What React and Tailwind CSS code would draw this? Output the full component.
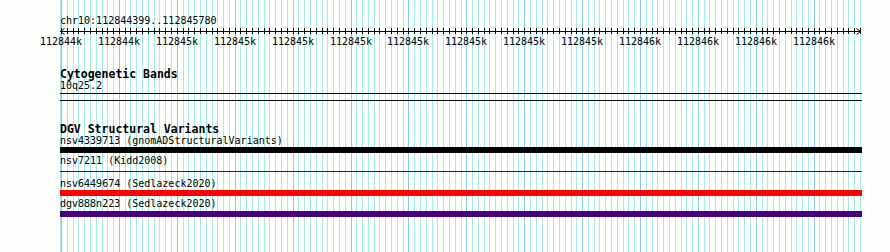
import React from "react";

const X0 = 61;
const MINOR = 5.79;
const MAJOR_LABELS = [
  "112844k", "112844k", "112845k", "112845k", "112845k", "112845k", "112845k",
  "112845k", "112845k", "112845k", "112846k", "112846k", "112846k", "112846k",
];

function Grid() {
  const lines = [];
  lines.push(<rect key="edge" x={60} y={0} width={1} height={252} fill="#a8e9ee" />);
  for (let k = 0; k <= 138; k++) {
    const x = Math.round(X0 + k * MINOR);
    lines.push(
      <rect key={k} x={x} y={0} width={1} height={252} fill={k % 10 === 0 ? "#8cc8ec" : "#a8e9ee"} />
    );
  }
  return (
    <svg className="absolute inset-0" width="890" height="252" shapeRendering="crispEdges" aria-hidden="true">
      {lines}
    </svg>
  );
}

function Ruler() {
  const ticks = [];
  for (let k = 0; k <= 138; k++) {
    const x = Math.round(X0 + k * MINOR) - 60 + 0.5;
    ticks.push(<line key={k} x1={x} y1={1} x2={x} y2={7} stroke="#000" strokeWidth="1" />);
  }
  return (
    <svg width="802" height="20" className="block overflow-visible" aria-hidden="true">
      <g shapeRendering="crispEdges">
        <line x1="0" y1="4.5" x2="801" y2="4.5" stroke="#000" strokeWidth="1" />
        {ticks}
      </g>
      <polyline points="4.5,1.5 0.5,4.5 4.5,7.5" fill="none" stroke="#000" strokeWidth="1" />
      <polyline points="796.5,1.5 800.5,4.5 796.5,7.5" fill="none" stroke="#000" strokeWidth="1" />
      {MAJOR_LABELS.map((label, i) => (
        <text
          key={i}
          x={Math.round(X0 + i * 10 * MINOR) - 60}
          y="17.5"
          textAnchor="middle"
          fontSize="10"
          fontFamily="'DejaVu Sans Mono', monospace"
          fill="#000"
        >
          {label}
        </text>
      ))}
    </svg>
  );
}

function Label({ children, className = "" }) {
  return <div className={`h-[12px] leading-[12px] whitespace-nowrap ${className}`}>{children}</div>;
}

function Title({ children, className = "" }) {
  return (
    <div className={`h-[12px] leading-[12px] text-[11.5px] font-bold whitespace-nowrap ${className}`}>
      {children}
    </div>
  );
}

export default function App() {
  return (
    <div className="relative w-[890px] h-[252px] overflow-hidden bg-[#fdfffd] text-black text-[10px] font-['DejaVu_Sans_Mono',monospace]">
      <Grid />
      <div className="relative pl-[60px] pr-[28px] pt-[15px]">
        <Label>chr10:112844399..112845780</Label>
        <Ruler />

        <Title className="mt-[21px]">Cytogenetic Bands</Title>
        <Label>10q25.2</Label>
        <div className="mt-[1px] h-[1px] bg-black" />
        <div className="mt-[6px] h-[1px] bg-black" />

        <Title className="mt-[22px]">DGV Structural Variants</Title>
        <Label>nsv4339713 (gnomADStructuralVariants)</Label>
        <div className="h-[6px] bg-black" />

        <Label className="mt-[2px]">nsv7211 (Kidd2008)</Label>
        <div className="mt-[4px] h-[1px] bg-[#4b0082]" />

        <Label className="mt-[6px]">nsv6449674 (Sedlazeck2020)</Label>
        <div className="h-[6px] bg-[#ff0000]" />

        <Label className="mt-[2px]">dgv888n223 (Sedlazeck2020)</Label>
        <div className="mt-[1px] h-[6px] bg-[#4b0082]" />
      </div>
    </div>
  );
}
